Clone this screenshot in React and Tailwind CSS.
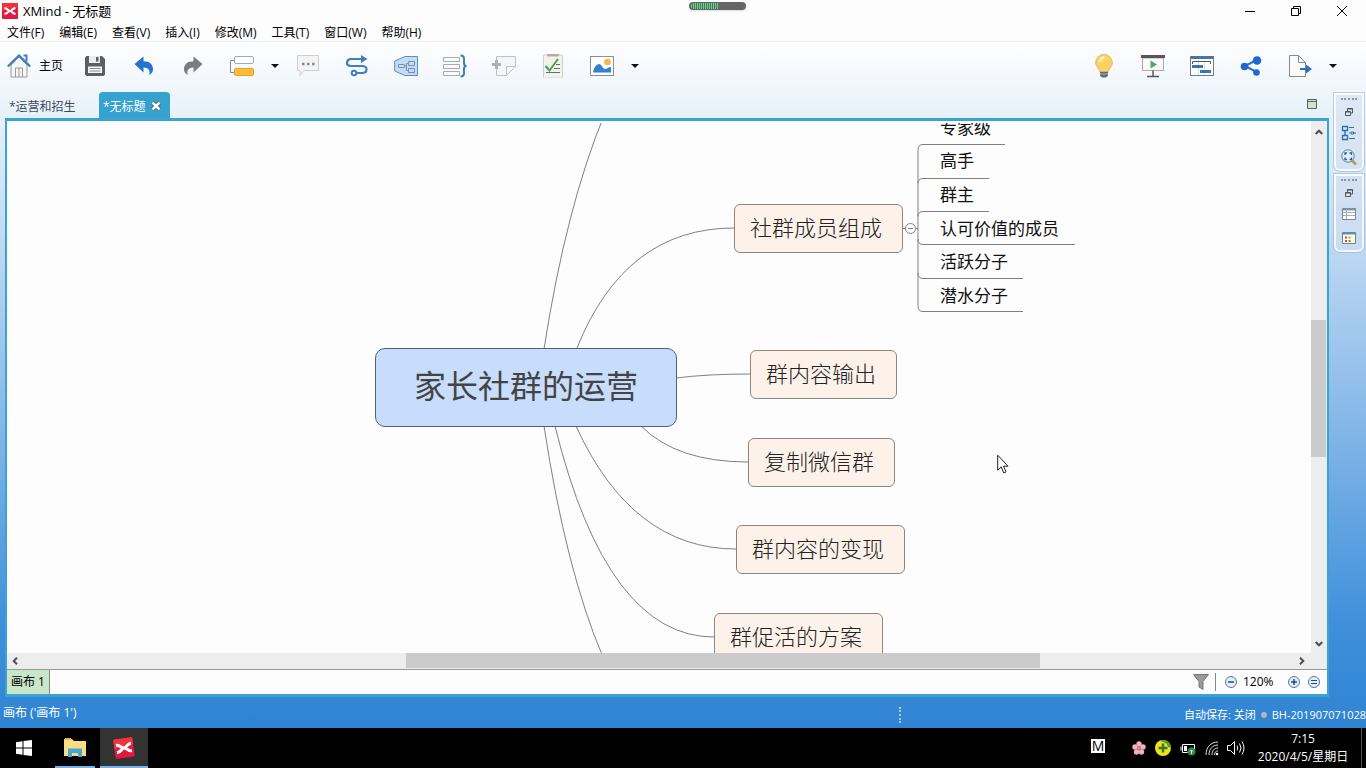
import React, { useState } from 'react';

const MENUS = ['文件(F)', '编辑(E)', '查看(V)', '插入(I)', '修改(M)', '工具(T)', '窗口(W)', '帮助(H)'];

// Topic positions are canvas coordinates
const BRANCHES = [
  { text: '社群成员组成', place: 'left-[727px] top-[83px]' },
  { text: '群内容输出', place: 'left-[743px] top-[229px]' },
  { text: '复制微信群', place: 'left-[741px] top-[317px]' },
  { text: '群内容的变现', place: 'left-[729px] top-[404px]' },
  { text: '群促活的方案', place: 'left-[707px] top-[492px]' }
];

const LEAVES = ['专家级', '高手', '群主', '认可价值的成员', '活跃分子', '潜水分子'];

function Icon({ children, className = 'w-6 h-6', box = '0 0 24 24' }) {
  return (
    <svg viewBox={box} className={className} fill="none" aria-hidden="true">
      {children}
    </svg>
  );
}

function ToolButton({ label, children }) {
  return (
    <button
      type="button"
      aria-label={label}
      className="w-[49px] h-12 flex items-center justify-center"
    >
      <Icon>{children}</Icon>
    </button>
  );
}

function Caret({ label }) {
  return (
    <button
      type="button"
      aria-label={label}
      className="w-[17px] h-12 flex items-center justify-center"
    >
      <Icon className="w-2 h-1" box="0 0 8 4">
        <path d="M0 0h8L4 4z" fill="#111" />
      </Icon>
    </button>
  );
}

function XLogo({ className, tilt }) {
  return (
    <Icon className={className} box="0 0 16 16">
      <g transform={tilt ? 'rotate(-8 8 8)' : undefined}>
        <rect x={tilt ? 1 : 0} y={tilt ? 1 : 0} width={tilt ? 14 : 16} height={tilt ? 14 : 16} rx="1" fill="#e5173f" />
        <path d={tilt ? 'M1 2a1 1 0 0 1 1-1h12a1 1 0 0 1 1 1v4L1 8z' : 'M0 0h16v5L0 8z'} fill="#f0333c" />
        <path d="M2.500 5.200c3 0 3.500 2.800 5.500 2.800s2.500-2.800 5.500-2.800M2.500 10.800c3 0 3.500-2.800 5.500-2.800s2.500 2.800 5.500 2.800" stroke="#fff" strokeWidth="2.200" />
      </g>
    </Icon>
  );
}

function TitleBar() {
  return (
    <header className="h-[22px] shrink-0 flex items-center bg-[#fdfdfd] pl-[2px] pr-px">
      <XLogo className="w-4 h-4" />
      <h1 className="ml-[5px] text-[13px] leading-4">XMind - 无标题</h1>
      <div className="ml-auto flex">
        <button type="button" aria-label="最小化" className="w-[46px] h-5 flex items-center justify-center">
          <Icon className="w-[10px] h-[10px]" box="0 0 10 10">
            <path d="M0 5.500h10" stroke="#000" />
          </Icon>
        </button>
        <button type="button" aria-label="还原" className="w-[46px] h-5 flex items-center justify-center">
          <Icon className="w-[10px] h-[10px]" box="0 0 10 10">
            <path d="M.5 2.500h7v7h-7zM2.500 2.500v-2h7v7h-2" stroke="#000" />
          </Icon>
        </button>
        <button type="button" aria-label="关闭" className="w-[46px] h-5 flex items-center justify-center">
          <Icon className="w-[10px] h-[10px]" box="0 0 10 10">
            <path d="M0 0l10 10M10 0L0 10" stroke="#000" />
          </Icon>
        </button>
      </div>
    </header>
  );
}

function Toolbar() {
  return (
    <div className="h-12 shrink-0 flex items-center pl-[7px] pr-[25px]">
      <button type="button" className="w-[63px] flex items-center gap-2 text-[12px] leading-4">
        <Icon>
          <path d="M4 11v12h16V11l-8-8z" fill="#f6f6f6" stroke="#999" />
          <path d="M8.500 23v-9h7v9M12 14v9" stroke="#999" />
          <path d="M16.500 1.500h3v6" stroke="#3d7fc4" strokeWidth="2" />
          <path d="M.8 12.500L12 1.500l11.200 11" stroke="#3d7fc4" strokeWidth="2.200" />
        </Icon>
        主页
      </button>

      <ToolButton label="保存">
        <path d="M2 3.500L3.500 2H19l3 3v15.500L20.500 22h-17L2 20.500z" fill="#5c5e62" />
        <path d="M6 2h11v7H6z" fill="#e9ebee" />
        <path d="M13 3h2.500v4.500H13z" fill="#5c5e62" />
        <path d="M5 12.500h14V19H5z" fill="#f6f6f6" />
        <path d="M6.500 14.500h11M6.500 17h11" stroke="#8a8c90" />
      </ToolButton>
      <ToolButton label="撤销">
        <path d="M2.500 10L11.500 2.500v4.800c6.500 0 9.500 3.500 9.500 8 0 3-1.500 4.700-3.800 5.700 1-3.500.3-7.500-5.700-7.500v5z" fill="#2673cb" />
      </ToolButton>
      <ToolButton label="重做">
        <path d="M21.500 10L12.500 2.500v4.800C6 7.300 3 10.800 3 15.300c0 3 1.500 4.700 3.800 5.700-1-3.500-.3-7.500 5.700-7.500v5z" fill="#7b7d80" />
      </ToolButton>
      <ToolButton label="主题">
        <path d="M4.500 6.500h-4v12h4" stroke="#888" />
        <rect x="4.500" y="2.500" width="19" height="7" rx="1.500" fill="#fff" stroke="#a8a8a8" />
        <rect x="4.500" y="14.500" width="19" height="7" rx="1.500" fill="#fbbd38" stroke="#e2a429" />
      </ToolButton>
      <Caret label="更多主题" />
      <ToolButton label="标签">
        <path d="M1.500 1.500h21v15H8L4 21.500v-5H1.500z" fill="#f4f4f6" stroke="#cfcfd3" />
        <path d="M6 10h2.500M11 10h2.500M16 10h2.500" stroke="#8c8688" strokeWidth="2.500" />
      </ToolButton>
      <ToolButton label="联系">
        <path d="M17 5H6a4 4 0 0 0-4 3.500C2 11 4 12 6 12h11c3 0 4.500 1.500 4.500 3.500S20 19 17 19h-6" stroke="#4080bd" strokeWidth="2.200" />
        <path d="M16 1l6.500 4L16 9z" fill="#4080bd" />
        <circle cx="9" cy="19" r="2.300" fill="#fff" stroke="#4080bd" strokeWidth="2" />
      </ToolButton>
      <ToolButton label="外框">
        <path d="M.7 7L11 2.500h12.500v19H11L.7 17z" fill="#c4dcf3" stroke="#5e8fc4" />
        <path d="M4.500 10.500h6v3h-6zM14.500 7.500h6v4h-6zM14.500 14.500h6v4h-6zM10.500 12h2V9.500h2M12.500 12v4.500h2" stroke="#7592b4" />
      </ToolButton>
      <ToolButton label="概要">
        <path d="M.5 3.500h16v4H.5zM.5 10.500h16v4H.5zM.5 17.500h16v4H.5z" fill="#fafafa" stroke="#aaa" />
        <path d="M17.500 1.500c2.500 0 3.500.5 3.500 3V9c0 2 .5 3 2.500 3-2 0-2.500 1-2.500 3v4.500c0 2.500-1 3-3.500 3" stroke="#4080bd" strokeWidth="2" />
      </ToolButton>
      <ToolButton label="备注">
        <path d="M4.500 2.500h19v10l-9 9h-10zM23.500 12.500h-9v9" fill="#f6f6f9" stroke="#bfc1c8" />
        <path d="M0 9h3V6h3v3h3v3H6v3H3v-3H0z" fill="#aeb0b2" />
      </ToolButton>
      <ToolButton label="任务">
        <rect x="2.500" y="1" width="19" height="23" rx="1" fill="#f2f3ef" stroke="#cfd0ca" />
        <rect x="6" y="0" width="12" height="2.500" rx="1" fill="#c3a79e" />
        <path d="M4.500 12l4 4.500L17 5" stroke="#49a049" strokeWidth="2" />
        <path d="M15 10.500h4M13 14.500h6M5 18.500h14" stroke="#65706a" />
      </ToolButton>
      <ToolButton label="图片">
        <rect x=".5" y="2.500" width="23" height="19" fill="#fff" stroke="#8a8f96" />
        <circle cx="17.500" cy="8" r="3.300" fill="#f5b94a" />
        <path d="M3 18.500c1-5 3.500-8.500 6-8.500s4 5 6 5 3.500-2 6-2v5.500z" fill="#347fce" />
      </ToolButton>
      <Caret label="更多图片" />

      <div className="ml-auto flex items-center">
        <ToolButton label="头脑风暴">
          <path d="M12 .5a8.300 8.300 0 0 0-8.300 8.300c0 3.700 3.300 5 4 8.700h8.600c.7-3.700 4-5 4-8.700A8.300 8.300 0 0 0 12 .5z" fill="#fbd264" stroke="#e3b455" />
          <path d="M8 8c0-3 2-4.500 4.500-4.500" stroke="#fff1bd" strokeWidth="2.500" />
          <path d="M8 18h8v3.500L14 23.500h-4L8 21.500z" fill="#656a73" />
          <path d="M8 20h8" stroke="#aab0ba" />
        </ToolButton>
        <ToolButton label="演示">
          <path d="M1.500 4h21v12.500h-21z" fill="#fafafa" stroke="#aaa" />
          <path d="M0 2.500h24" stroke="#55575a" strokeWidth="3" />
          <path d="M9.500 6.500v8l6.500-4z" fill="#59a65b" />
          <path d="M12 16.500V22M6 22.500h12" stroke="#55575a" strokeWidth="1.500" />
        </ToolButton>
        <ToolButton label="甘特图">
          <rect x=".5" y="2.500" width="23" height="19" fill="#fff" stroke="#66809c" />
          <path d="M1 3.500h22" stroke="#4377a6" strokeWidth="3" />
          <path d="M8.500 6v15M14.500 6v15" stroke="#d5e1ed" />
          <path d="M2.500 10V7.500h18V10" stroke="#555" />
          <path d="M2 12.500h11M10 17.500h11" stroke="#3a74b5" strokeWidth="3" />
        </ToolButton>
        <ToolButton label="分享">
          <path d="M17.500 6L6 12l11.500 6" stroke="#2a70ce" strokeWidth="2" />
          <circle cx="18" cy="6.500" r="4.300" fill="#2268cf" />
          <circle cx="5.500" cy="12.500" r="3.800" fill="#2268cf" />
          <circle cx="17.500" cy="18.500" r="3.300" fill="#2268cf" />
        </ToolButton>
        <ToolButton label="导出">
          <path d="M1.500 1.500h9l7 7v14h-16zM10.500 1.500v7h7" fill="#fafafa" stroke="#888" />
          <path d="M12 14h6v-3.500l6 4.500-6 4.500V16h-6z" fill="#2d6fb7" />
        </ToolButton>
        <Caret label="更多导出" />
      </div>
    </div>
  );
}

function EditorTabs() {
  return (
    <div className="h-7 shrink-0 flex items-end text-[12px] leading-4">
      <button type="button" className="h-[26px] w-[94px] pl-1 pt-[3px] text-left text-[#3c4a5c]">
        *运营和招生
      </button>
      <div className="h-[26px] w-[71px] pl-1 pt-[3px] flex items-center rounded-t-[4px] bg-[#36a2d0] text-white">
        <button type="button">*无标题</button>
        <button type="button" aria-label="关闭标签" className="ml-[5px] mb-[2px]">
          <Icon className="w-[10px] h-[10px]" box="0 0 10 10">
            <path d="M1.500 1.500l7 7M8.500 1.500l-7 7" stroke="#3d5b6b" strokeWidth="4" />
            <path d="M1.500 1.500l7 7M8.500 1.500l-7 7" stroke="#fff" strokeWidth="2.500" />
          </Icon>
        </button>
      </div>
      <button type="button" aria-label="最大化编辑器" className="ml-auto mr-3 mb-[9px]">
        <Icon className="w-[10px] h-[10px]" box="0 0 10 10">
          <path d="M.5.5h9v9h-9zM.5 2.500h9" fill="#cfe3cf" stroke="#4d6657" />
        </Icon>
      </button>
    </div>
  );
}

function MindMap() {
  return (
    <div className="relative flex-1 min-w-0 overflow-hidden bg-[#fdfdfd] [clip-path:inset(2px_0_0_0)] font-['Noto_Sans_CJK_SC',sans-serif]">
      <svg className="absolute left-0 top-0 w-[1304px] h-[532px]" fill="none" stroke="#808080" aria-hidden="true">
        <path d="M537 228Q559 86 598 -8" />
        <path d="M570 227Q618 107 727 107" />
        <path d="M669 257Q700 253 743 253" />
        <path d="M634 305Q670 341 741 341" />
        <path d="M569 305Q625 428 729 428" />
        <path d="M548 305Q600 516 707 516" />
        <path d="M537 305Q559 450 596 536" />
        <path d="M895 107.500h4" />
        <circle cx="903.500" cy="107.500" r="5" fill="#fff" />
        <path d="M901 107.500h5M909 107.500h2" />
        <path d="M998 23.500h-82q-5 0-5 5v157q0 5 5 5h100" />
        <path d="M982 57.500h-66q-5 0-5 5M982 90.500h-66q-5 0-5 5" />
        <path d="M911 118q0 5.500 5 5.500h152M911 152q0 5.500 5 5.500h100" />
      </svg>

      <div className="absolute left-[368px] top-[227px] w-[302px] h-[79px] pb-2 flex items-center justify-center rounded-[10px] border border-[#4a6284] bg-[#c8dcfb] text-[32px] leading-10 text-[#444]">
        家长社群的运营
      </div>

      {BRANCHES.map(branch => (
        <div
          key={branch.text}
          className={`absolute h-[49px] pl-[15px] pr-5 pb-[6px] flex items-center rounded-[6px] border border-[#8c8680] bg-[#fcf2ea] text-[22px] leading-8 font-light text-[#222] whitespace-nowrap ${branch.place}`}
        >
          {branch.text}
        </div>
      ))}

      <ul className="absolute left-[933px] top-[-11px] h-[202px] grid grid-rows-6 text-[17px] leading-6 text-[#111] whitespace-nowrap">
        {LEAVES.map(leaf => (
          <li key={leaf} className="flex items-center">
            {leaf}
          </li>
        ))}
      </ul>

      <svg className="absolute left-[990px] top-[333px] w-3 h-5" viewBox="0 0 12 20" aria-hidden="true">
        <path d="M.7 1.200v15l3.500-3.300 2.500 6 2.300-1-2.500-5.700H11z" fill="#fff" stroke="#222" />
      </svg>
    </div>
  );
}

function ScrollButton({ label, path, className }) {
  return (
    <button type="button" aria-label={label} className={`flex items-center justify-center shrink-0 ${className}`}>
      <Icon className="w-2 h-2" box="0 0 8 8">
        <path d={path} stroke="#505050" strokeWidth="2" />
      </Icon>
    </button>
  );
}

function Editor() {
  const [zoom, setZoom] = useState(120);

  return (
    <div className="flex-1 min-h-0 flex flex-col border-x-2 border-t-[3px] border-b-[3px] border-[#3ba3cf] bg-[#fdfdfd]">
      <div className="flex-1 min-h-0 flex">
        <MindMap />
        <div className="w-4 shrink-0 flex flex-col bg-[#ededed]">
          <ScrollButton label="向上滚动" path="M.7 6L4 2.700 7.300 6" className="h-[22px]" />
          <div className="flex-[177]" />
          <div className="flex-[136] w-[15px] bg-[#cbcbcb]" />
          <div className="flex-[178]" />
          <ScrollButton label="向下滚动" path="M.7 2L4 5.300 7.300 2" className="h-[18px]" />
        </div>
      </div>

      <div className="h-4 shrink-0 flex bg-[#ededed] pr-[17px]">
        <ScrollButton label="向左滚动" path="M6 .7L2.700 4 6 7.300" className="w-4" />
        <div className="flex-[383]" />
        <div className="flex-[634] h-[15px] bg-[#cbcbcb]" />
        <div className="flex-[254]" />
        <ScrollButton label="向右滚动" path="M2 .7L5.300 4 2 7.300" className="w-4" />
      </div>

      <div className="h-[25px] shrink-0 flex items-center border-t border-[#999] pr-[7px] text-[12px] leading-4">
        <button type="button" className="self-stretch px-1 pb-px border-r border-[#888] bg-[#c8e6c9]">
          画布 1
        </button>
        <button type="button" aria-label="筛选" className="ml-auto">
          <Icon className="w-4 h-4" box="0 0 16 16">
            <path d="M.5.500h15L10 7.500v8l-4-2.500V7.500z" fill="#9a9a9a" stroke="#777" />
          </Icon>
        </button>
        <div className="w-px h-[18px] ml-[6px] mr-[9px] bg-[#888]" />
        <button type="button" aria-label="缩小" onClick={() => setZoom(zoom - 10)}>
          <Icon className="w-3 h-3" box="0 0 12 12">
            <circle cx="6" cy="6" r="5.500" fill="#e4eefa" stroke="#56789c" />
            <path d="M3 6h6" stroke="#1f4d80" strokeWidth="1.500" />
          </Icon>
        </button>
        <output className="w-[50px] pl-[6px]">{zoom}%</output>
        <button type="button" aria-label="放大" onClick={() => setZoom(zoom + 10)} className="ml-[1px]">
          <Icon className="w-3 h-3" box="0 0 12 12">
            <circle cx="6" cy="6" r="5.500" fill="#e4eefa" stroke="#56789c" />
            <path d="M3 6h6M6 3v6" stroke="#1f4d80" strokeWidth="1.500" />
          </Icon>
        </button>
        <button type="button" aria-label="实际大小" onClick={() => setZoom(100)} className="ml-2">
          <Icon className="w-3 h-3" box="0 0 12 12">
            <circle cx="6" cy="6" r="5.500" fill="#e4eefa" stroke="#56789c" />
            <path d="M3 4.500h6M3 7.500h6" stroke="#1f4d80" />
          </Icon>
        </button>
      </div>
    </div>
  );
}

function SideGroup({ children }) {
  return (
    <div className="h-[78px] flex flex-col items-center justify-between rounded-b-[6px] border-2 border-white/80 bg-[#d3dff2]/60 pt-[3px] pb-1 outline outline-[#9fb4ce]/60">
      <div className="w-4 border-t-2 border-dotted border-[#8d95a3]" />
      <button type="button" aria-label="还原视图">
        <Icon className="w-2 h-2" box="0 0 8 8">
          <path d="M.5 3.500h5v4h-5zM2.500 3V.5h5V5H6" stroke="#555" />
          <path d="M.5 4h5M2.500 1h5" stroke="#555" />
        </Icon>
      </button>
      {children}
    </div>
  );
}

function SideButton({ label, children }) {
  return (
    <button type="button" aria-label={label}>
      <Icon className="w-4 h-4" box="0 0 16 16">
        {children}
      </Icon>
    </button>
  );
}

function SideBar() {
  return (
    <aside className="w-[37px] shrink-0 pl-[5px] pr-[2px] pt-[3px] flex flex-col gap-[3px]">
      <SideGroup>
        <SideButton label="大纲">
          <path d="M1.500 1.500h5v4h-5zM1.500 10.500h5v4h-5zM4 5.500v5" fill="#d5e8fa" stroke="#2a6da8" strokeWidth="1.300" />
          <path d="M8 2.500h5M8 8h1M13 8h2M8 13.500h6" stroke="#2a6da8" />
          <path d="M10 7h2.500v2H10z" stroke="#2a6da8" />
        </SideButton>
        <SideButton label="鸟瞰图">
          <path d="M10.500 11l4.500 4.500" stroke="#c8953a" strokeWidth="2.500" />
          <circle cx="7" cy="7" r="6.200" fill="#e1effc" stroke="#5b7f9c" />
          <path d="M4 6V4h2M8.500 4h2v2M10.500 8.500v2h-2M6 10.500H4v-2" stroke="#226096" strokeWidth="1.300" />
        </SideButton>
      </SideGroup>
      <SideGroup>
        <SideButton label="属性">
          <path d="M1.500 2.500h13v11h-13z" fill="#fff" stroke="#7b8794" />
          <path d="M2 3.500h12" stroke="#7d95b1" strokeWidth="2" />
          <path d="M2 6.500h12M2 9.500h12M5.500 5v8" stroke="#a6b0bb" />
        </SideButton>
        <SideButton label="图标">
          <path d="M1.500 2.500h13v11h-13z" fill="#fdf9e8" stroke="#5e8b92" />
          <path d="M1.500 3.500h13" stroke="#539aa6" strokeWidth="2" />
          <path d="M4 7.500h2M4 11h2" stroke="#d0433c" strokeWidth="2" />
          <path d="M7.500 7.500h2" stroke="#e09535" strokeWidth="2" />
          <path d="M7.500 11h2" stroke="#4d9a4b" strokeWidth="2" />
        </SideButton>
      </SideGroup>
    </aside>
  );
}

function StatusBar() {
  return (
    <div className="h-[31px] shrink-0 flex items-center pl-[3px] text-white">
      <span className="text-[12px] leading-4">画布 (&apos;画布 1&apos;)</span>
      <div className="ml-auto flex items-center text-[11px] leading-4 pt-1">
        <div className="h-4 mr-[283px] border-l-2 border-dotted border-[#a6c9ec]" />
        <span>自动保存: 关闭</span>
        <span className="w-[6px] h-[6px] mx-[5px] rounded-full bg-[#b7b3bd]" />
        <span>BH-201907071028</span>
      </div>
    </div>
  );
}

function Taskbar() {
  return (
    <footer className="h-10 shrink-0 flex bg-black text-white">
      <button type="button" aria-label="开始" className="w-12 flex items-center justify-center">
        <Icon className="w-4 h-4" box="0 0 16 16">
          <path d="M0 2.200L6.500 1.300v6.200H0zM7.500 1.100L16 0v7.500H7.500zM0 8.500h6.500v6.200L0 13.800zM7.500 8.500H16V16l-8.500-1.100z" fill="#fff" />
        </Icon>
      </button>
      <button type="button" aria-label="文件资源管理器" className="w-10 ml-[7px] pt-[2px] flex items-center justify-center border-b-2 border-[#77b2e4]">
        <Icon className="w-[22px] h-[22px]" box="0 0 22 22">
          <path d="M0 2h8l2 2h12v15H0z" fill="#f7dd86" />
          <path d="M1 1h6v2H1z" fill="#e8b640" />
          <path d="M4 20v-8.500h14V20h-4v-4H8v4z" fill="#45a9ce" />
        </Icon>
      </button>
      <button type="button" aria-label="XMind" className="w-12 ml-[5px] pt-[2px] flex items-center justify-center border-b-2 border-[#77b2e4] bg-[#333]">
        <XLogo className="w-[22px] h-[22px]" tilt />
      </button>

      <div className="ml-auto flex items-center">
        <span className="w-[14px] h-[14px] mb-1 bg-white text-black text-[14px] leading-[14px] text-center">M</span>
        <Icon className="w-[14px] h-[14px] ml-[27px]" box="0 0 14 14">
          <g fill="#f3b0ba">
            <circle cx="7" cy="3" r="2.700" />
            <circle cx="3" cy="6" r="2.700" />
            <circle cx="11" cy="6" r="2.700" />
            <circle cx="4.500" cy="11" r="2.700" />
            <circle cx="9.500" cy="11" r="2.700" />
          </g>
          <circle cx="7" cy="7.300" r="2" fill="#cf8590" />
        </Icon>
        <Icon className="w-4 h-4 ml-[9px]" box="0 0 16 16">
          <circle cx="8" cy="8" r="8" fill="#f2df1f" />
          <path d="M8 0a8 8 0 0 1 8 8l-3-1C12 3 9 2 5 1z" fill="#4f9c31" />
          <path d="M3.500 8h9M8 3.500v9" stroke="#2e7d26" strokeWidth="2.500" />
        </Icon>
        <Icon className="w-4 h-4 ml-[9px]" box="0 0 16 16">
          <path d="M2.500 4.500h12v8h-12zM1 6.500v4" stroke="#fff" />
          <path d="M4 6h3v5H4z" fill="#fff" />
          <circle cx="11.500" cy="11.500" r="4" fill="#2f8a49" />
          <path d="M11.500 14v-4l-1.500 1.500M11.500 10l1.500 1.500" stroke="#d7f0dc" />
        </Icon>
        <Icon className="w-[14px] h-4 ml-[9px]" box="0 0 14 16">
          <path d="M1 15C1 7 6 2 13 2M4 15c0-6 3.500-10 9-10M7 15c0-4 2-7 6-7M9.500 15c0-2.500 1-4 3.500-4" stroke="#ddd" />
          <circle cx="12" cy="14" r="1.300" fill="#fff" />
        </Icon>
        <Icon className="w-[18px] h-4 ml-2" box="0 0 18 16">
          <path d="M.5 5.500h3l4-4v13l-4-4h-3zM10 5.500q1.500 2.500 0 5M12.500 3.500q3 4.500 0 9M15 1.500q4 6.500 0 13" stroke="#fff" />
        </Icon>
        <time className="w-[116px] flex flex-col items-center gap-[2px] text-[12px] leading-4">
          <span>7:15</span>
          <span>2020/4/5/星期日</span>
        </time>
        <div className="w-px h-full mr-1 bg-[#555]" />
      </div>
    </footer>
  );
}

export default function App() {
  return (
    <div className="relative h-screen flex flex-col overflow-hidden bg-[#fdfdfd] text-black select-none font-['Open_Sans','Noto_Sans_CJK_SC',sans-serif]">
      <TitleBar />

      <nav className="h-5 shrink-0 flex items-center gap-[15px] pl-[7px] pt-[2px] text-[12px] leading-4 border-b border-[#ececec]">
        {MENUS.map(menu => (
          <button key={menu} type="button">{menu}</button>
        ))}
      </nav>

      <div className="flex-1 min-h-0 flex flex-col bg-[linear-gradient(to_bottom,#fefeff_0%,#e7f1fa_11%,#b9d5f1_32%,#84b7e8_56%,#3f8fdb_85%,#2f84d2_100%)]">
        <Toolbar />
        <main className="flex-1 min-h-0 flex pl-[5px]">
          <div className="flex-1 min-w-0 flex flex-col">
            <EditorTabs />
            <Editor />
          </div>
          <SideBar />
        </main>
        <StatusBar />
      </div>

      <Taskbar />

      {/* Floating charge meter over the title bar */}
      <div className="absolute left-[689px] top-[2px] w-[57px] h-2 flex items-center rounded-full bg-[#666] px-[2px] shadow">
        <div className="w-[27px] h-[6px] rounded-l-full bg-[repeating-linear-gradient(to_right,#6fd08a_0_1px,#47795a_1px_2px)]" />
      </div>
    </div>
  );
}
